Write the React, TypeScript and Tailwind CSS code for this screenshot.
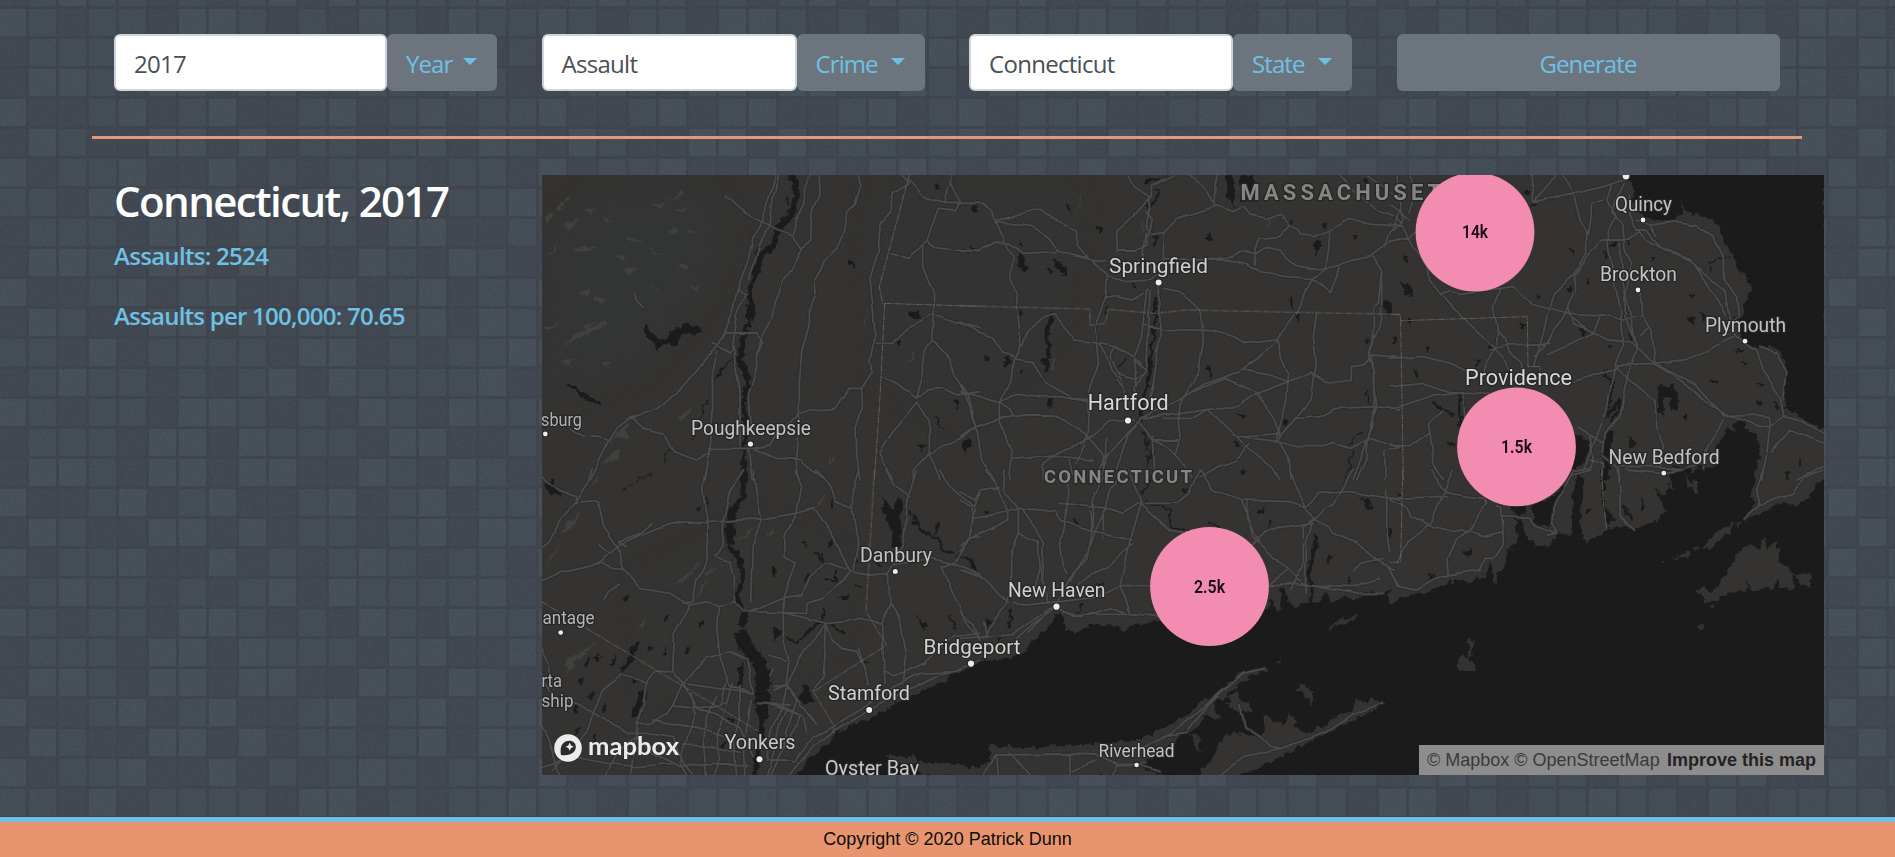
import React from "react";

/* ---------- tiled backdrop ---------- */

const TILE_ROWS = [
  "MMDLDMMMMDLLDMDMML",
  "DMLMMDMDMLDLMMMMLD",
  "LMDMMDLLMDMDLMDLMM",
  "DMMMDLLDLMMMDLLDDM",
  "DLLMDLLDLLDDLMDLMD",
  "LDDMLDMLDDMLDMLDMM",
  "DLMDDLLDLDMMDMLDLM",
  "LDMMLDDLDMDMLMDMMD",
];
const ROW_ORDER = [1, 2, 3, 4, 5, 6, 7, 0, 3, 4, 5, 6, 0, 1, 2, 3, 4, 5, 6, 7, 1, 2, 3, 4, 5, 6, 7, 0];
const TILE_FILL: Record<string, string> = { D: "#404751", M: "#434b55", L: "#464e58" };

function Backdrop() {
  return (
    <svg className="absolute inset-0 h-full w-full" aria-hidden="true">
      <defs>
        <filter id="grain" x="0" y="0" width="100%" height="100%" colorInterpolationFilters="sRGB">
          <feTurbulence type="fractalNoise" baseFrequency="0.35" numOctaves="2" seed="4" />
          <feColorMatrix values="0 0 0 0 1  0 0 0 0 1  0 0 0 0 1  0.2 0 0 0 -0.07" />
        </filter>
      </defs>
      <rect width="100%" height="100%" fill="#3d444e" />
      {ROW_ORDER.map((r, y) =>
        Array.from({ length: 64 }, (_, x) => (
          <rect
            key={`${x}-${y}`}
            x={x * 30 - 1}
            y={y * 30 - 21}
            width={27}
            height={27}
            fill={TILE_FILL[TILE_ROWS[r][x % 18]]}
          />
        ))
      )}
      <rect width="100%" height="100%" filter="url(#grain)" opacity="0.25" />
    </svg>
  );
}

/* ---------- map data: each sheet is drawn at three times scale ---------- */

type Sheet = {
  x: number;
  y: number;
  roads: string;
  water?: string;
  rivers?: [string, number][];
  ponds: string;
  hills?: string;
  borders?: string;
};

const SHEETS: Sheet[] = [
  {
    x: 540,
    y: 170,
    roads:
      "M708 15 L685 90 L665 160 L640 200 L625 270 L592 355 L575 430 L550 500 L520 535 L470 600 L410 670 L360 715 L270 745 L230 775 L200 820 L175 870 L155 930 M716 15 L700 80 L690 160 L660 220 L640 290 L625 330 M555 80 L575 90 L620 130 L705 180 L750 195 L787 238 M592 355 L615 375 L590 430 L575 530 M805 15 L790 60 L795 100 L770 150 L757 195 M838 15 L840 75 L815 130 L812 210 L787 238 L750 310 L730 330 L705 400 L700 440 L668 500 L648 545 L650 590 L625 680 L630 760 M555 492 L650 492 L668 515 L650 545 M955 15 L962 50 L945 105 L920 125 L915 180 L890 235 L850 275 L822 330 L825 370 L808 420 L808 460 L785 545 L778 640 L778 740 L768 850 L770 900 L778 930 M1085 15 L1110 40 L1060 70 L1048 130 L1020 160 L1015 240 L990 330 L1000 420 L1005 500 L990 570 L995 600 L965 655 L968 715 L948 760 L950 850 L960 930 M965 655 L925 655 L885 715 L820 720 L780 735 L720 770 L690 825 L640 835 L600 835 L510 835 L495 930 M1110 30 L1150 80 L1215 97 L1320 97 M1235 15 L1230 45 L1215 95 M1235 45 L1260 95 L1245 120 L1195 115 L1175 170 L1160 215 L1110 265 L1050 248 M1160 215 L1180 230 L1320 245 M1148 230 L1148 290 L1180 370 L1183 430 L1178 510 L1150 540 L1150 610 L1130 685 L1070 640 L1025 618 M1320 475 L1260 460 L1180 432 L1110 470 L1060 520 L1010 520 M1178 510 L1230 560 L1245 620 L1280 670 L1310 770 M1130 685 L1165 660 L1210 655 L1250 675 L1320 665 M1130 700 L1165 755 L1165 850 L1120 900 L1120 930 M1130 700 L1060 785 L1020 850 L1060 930 M1310 770 L1275 800 L1215 825 L1165 855 L1200 930 M520 515 L570 550 L580 530 L585 580 L600 660 L600 830 M530 540 L517 600 L518 740 L505 850 L470 870 L400 845 L370 790 L310 775 L280 745 M78 770 L130 800 L170 798 L205 808 M285 365 L288 390 L310 412 M640 835 L710 865 L780 868 L850 925 M625 835 L632 900 L640 930",
    rivers: [
      ["M757 15 L770 60 L760 125 L712 175", 18],
      ["M712 175 L700 228 L662 255 L650 300 L632 345 L630 440 L612 500", 15],
      ["M630 400 L634 450 M662 240 L656 275", 24],
      ["M612 500 L600 570 L625 630 L612 680", 18],
      ["M612 680 L614 780 L614 850 L610 930", 13],
      ["M740 75 L745 110 M582 567 L550 585 L527 635", 6],
      ["M502 690 L488 730 L455 808 M370 880 L380 840 L395 845", 4],
    ],
    ponds:
      "M315 465 L340 495 L370 510 L400 480 L440 462 L485 475 L460 495 L425 490 L405 530 L385 515 L350 542 L345 520 L318 500 Z M80 645 L105 650 L150 680 L180 705 L140 690 Z M925 285 L930 272 L948 293 Z M1180 45 L1195 40 L1195 60 Z M1105 430 L1140 415 L1135 440 L1120 445 Z M1065 517 L1080 512 L1080 525 Z M1245 690 L1255 690 L1258 715 Z M1185 740 L1195 745 L1208 778 Z M1265 820 L1295 810 L1275 848 Z M1130 820 L1160 828 L1145 840 Z M1295 110 L1312 105 L1300 125 Z M1290 230 L1305 232 L1300 242 Z",
    hills:
      "M330 105 L375 100 L365 112 Z M380 90 L430 65 L435 75 Z M400 125 L440 110 L430 130 Z M50 110 L90 80 L60 125 Z M70 165 L120 145 L90 185 Z M20 260 L50 210 L45 240 Z M260 200 L310 215 L270 215 Z M100 235 L180 225 L120 250 Z M330 235 L370 255 L340 250 Z M420 280 L450 295 L430 300 Z M250 300 L290 290 L270 315 Z M330 330 L360 370 L340 350 Z M450 350 L490 345 L460 362 Z M120 370 L160 345 L140 380 Z M160 375 L190 380 L180 410 Z M10 470 L60 460 L20 485 Z M70 530 L110 490 L200 455 L205 465 L120 500 Z M130 470 L170 455 L140 480 Z M60 575 L110 560 L80 585 Z M180 580 L215 570 L200 590 Z M310 500 L340 480 L320 510 Z M10 150 L40 120 L20 165 Z M140 120 L170 115 L150 135 Z M190 140 L215 155 L195 155 Z M410 740 L460 710 L430 750 Z M190 830 L260 760 L265 800 L220 810 Z M180 880 L240 830 L230 870 Z M970 470 L985 405 L980 450 Z M860 890 L885 850 L875 880 Z M1105 575 L1135 530 L1120 570 Z M380 180 L420 175 L400 190 Z M440 185 L480 180 L460 192 Z M230 255 L260 260 L240 270 Z",
    borders: "M1108 15 L1050 230 L1018 350 L1028 400 L1320 409 M1034 400 L1020 680 L1003 930",
  },
  {
    x: 960,
    y: 170,
    roads:
      "M0 97 L60 97 L95 125 L135 215 L160 260 L152 320 L170 380 L180 500 L170 560 L155 620 L118 698 L118 760 L155 850 L150 930 M112 150 L200 130 L235 120 L290 150 L345 180 L355 230 L390 270 L440 275 M112 155 L220 170 L260 200 L300 245 L390 268 M0 240 L50 245 L110 215 L150 220 L190 250 L290 245 M170 565 L130 545 L90 500 L50 485 L0 455 M180 525 L205 490 L250 440 L280 430 L310 465 L345 510 L415 520 L470 530 L500 550 L545 580 M170 568 L220 575 L260 640 L340 685 L400 690 M505 15 L520 50 L565 80 L570 120 L560 180 M640 15 L575 45 L570 80 L525 130 L470 185 L472 245 M472 240 L530 240 L560 230 L555 190 L548 270 M560 120 L580 150 L560 200 M610 270 L612 185 L570 190 M690 15 L740 60 L770 110 L700 130 L650 145 L612 185 M770 15 L765 105 L820 125 L850 110 L870 135 L925 145 L960 130 L990 170 L1015 180 L1025 195 L1060 200 L1110 180 L1170 148 L1230 160 L1320 165 M390 268 L440 315 L435 380 L405 470 L415 580 L390 650 L385 790 L350 880 M440 320 L500 335 L570 330 L610 300 M560 355 L545 500 L520 570 L530 640 L525 700 M590 350 L600 400 L600 500 L580 640 L560 720 M570 360 L565 500 L560 590 L530 650 M610 355 L660 365 L720 420 L730 500 L710 620 L665 690 L655 760 L660 800 L645 855 M550 370 L520 390 L470 380 L435 385 M550 465 L620 478 L750 482 L820 500 L860 520 L950 510 L1010 425 L1060 325 L1100 295 L1180 270 L1230 260 L1270 230 L1320 205 M610 265 L740 270 L810 270 L860 280 L910 310 L980 320 L1060 325 M740 270 L800 262 L850 245 L890 255 L920 235 L960 245 L1010 285 L1090 298 M885 285 L895 205 L960 200 L990 172 M1060 325 L1112 372 L1140 290 M1110 180 L1105 250 L1095 295 M1240 260 L1265 300 L1255 400 L1240 410 L1240 520 L1225 560 L1240 600 L1250 710 L1225 800 L1220 860 L1190 930 M1265 300 L1265 450 L1230 540 L1245 640 L1240 760 L1180 930 M1320 120 L1290 190 L1275 235 M1220 15 L1320 90 M1140 15 L1180 60 L1250 120 L1300 140 M540 745 L640 700 L740 640 L840 605 L900 560 L955 512 L960 560 L985 620 L980 690 L955 790 L945 815 M690 670 L760 640 L800 625 L890 670 L940 740 L960 800 M800 620 L850 600 L930 615 L985 635 L1050 610 L1100 635 L1170 635 L1172 590 L1210 585 L1240 555 L1320 562 M1070 430 L1060 500 L1068 570 L1050 690 L1010 740 L950 815 M540 745 L620 735 L740 715 L830 710 L890 670 L985 635 M1010 745 L1080 740 L1130 715 L1250 710 L1320 720 M610 745 L690 745 L740 715 L800 770 L850 820 L940 895 L960 930 M820 795 L880 805 L950 815 L1010 830 L1090 830 L1120 820 L1170 835 L1230 805 L1320 835 M960 790 L830 800 M955 815 L985 870 L990 930 M870 820 L830 870 L770 890 L720 920 M1275 930 L1275 845 L1320 835 M0 665 L60 680 L118 698 L170 670 L240 680 L300 680 L385 695 M0 640 L50 770 L65 870 L105 930 M0 805 L50 770 L118 745 L200 735 L285 735 L385 800 L430 850 L430 890 M155 865 L230 858 L310 860 L400 870 M118 698 L150 720 L160 740 M540 750 L520 770 L440 860 L420 930 M540 750 L500 800 L470 900 M540 760 L580 810 L620 830 L655 865 L700 920 M580 810 L655 810 M580 800 L585 930 M520 750 L450 755 L400 800 L290 850 L250 880 L250 930 M545 580 L500 550 L465 530 L450 560 L465 600 L490 640 L495 690 M520 570 L560 600 L530 625 L470 610 M415 520 L440 560 L455 605 L495 660 M330 870 L345 930 M440 800 L440 850 L400 930",
    rivers: [
      ["M585 60 L600 65 L575 110 L555 110 M570 180 L595 205 L580 225", 5],
      ["M587 380 L582 500 L570 580 L565 640 L545 700 L540 760", 9],
      ["M545 780 L560 820 L570 810 L555 840 L580 850 L560 870 L565 930", 4],
      ["M280 425 L262 480 L265 560 L260 605", 11],
      ["M455 598 L480 590 L500 565 M520 345 L530 355 M440 410 L438 435 M1205 790 L1180 800 L1168 825 M1175 840 L1168 890 L1155 930 M1220 660 L1220 690 L1230 700", 4],
    ],
    ponds:
      "M800 15 L820 15 L822 110 L800 75 Z M840 15 L880 15 L875 90 L845 90 Z M33 122 L48 103 L45 120 Z M315 105 L325 110 L330 130 Z M410 165 L425 175 L425 195 Z M170 260 L185 250 L200 300 L180 295 Z M175 218 L188 220 L185 230 Z M275 262 L300 285 L320 290 L318 318 L295 295 Z M265 298 L275 295 L272 308 Z M560 25 L600 28 L560 40 Z M735 205 L750 190 L757 212 Z M1065 215 L1083 212 L1070 258 Z M990 150 L1000 155 L995 170 Z M1090 160 L1100 165 L1095 178 Z M1178 195 L1190 195 L1185 212 Z M1270 390 L1295 410 L1290 432 L1275 425 Z M990 380 L1000 395 L995 420 Z M1010 430 L1020 435 L1015 455 Z M178 420 L188 430 L182 450 Z M73 558 L85 560 L82 573 Z M132 560 L150 555 L140 598 Z M180 605 L190 600 L186 615 Z M245 570 L268 575 L262 608 Z M265 680 L283 690 L275 712 L263 705 Z M740 590 L752 592 L748 622 Z M828 730 L855 740 L850 750 Z M970 740 L982 750 L975 770 Z M5 825 L35 812 L15 845 Z M825 815 L838 820 L832 827 Z M845 900 L860 908 L855 915 Z M1215 508 L1228 512 L1225 528 Z M1300 505 L1308 510 L1302 525 Z M1205 30 L1220 28 L1215 45 Z M30 230 L48 235 L40 240 Z",
    hills: "M905 170 L940 145 L920 165 Z M350 130 L370 40 L360 110 Z M540 190 L555 140 L550 180 Z M270 600 L285 560 L280 600 Z M275 480 L285 440 L280 470 Z",
    borders: "M0 407 L390 417 L390 465 L435 460 L445 418 L585 430 L680 420 L1320 433",
  },
  {
    x: 1390,
    y: 170,
    roads:
      "M20 140 L75 240 L115 290 L118 330 L155 375 L200 425 L230 455 L270 490 L310 530 L340 560 L355 600 M155 375 L180 365 L210 370 L330 355 L370 350 L430 405 L530 430 L640 435 L700 450 L750 435 M330 355 L310 410 L322 475 L320 530 L290 570 L285 620 M320 480 L350 510 L365 550 L395 580 L395 600 M500 15 L430 95 L560 70 L640 50 L700 30 M430 15 L430 95 M520 15 L550 70 L570 150 L590 180 L590 250 L550 310 L490 370 L470 440 L460 490 L430 590 M640 90 L605 100 L602 150 L595 190 M665 40 L650 90 L678 140 L655 180 L655 230 L670 320 L690 410 L700 500 L700 530 L675 580 L650 720 L620 800 L580 900 M700 40 L675 90 L665 130 L698 160 L705 240 L725 280 L705 380 L705 440 L720 470 L740 530 L715 620 L690 740 L645 790 L640 850 M640 210 L715 210 L750 185 L770 210 L830 240 L900 270 L940 310 L1005 365 L1015 430 L1025 490 L1100 540 L1120 600 L1170 680 L1180 735 M715 80 L720 130 L740 180 L770 180 L810 230 L900 265 L960 360 L1000 410 L1005 440 M740 150 L780 165 L860 155 L920 165 L970 200 L1000 260 L1000 330 L1040 380 L1045 440 L1010 470 M780 165 L800 200 M690 220 L700 340 L720 430 L740 530 M635 210 L600 250 L550 320 L555 360 L530 430 L490 480 L480 510 L430 560 M530 430 L600 480 L650 510 L720 515 L780 570 L830 600 L910 640 L1000 740 M680 585 L790 580 L880 570 L960 540 L1010 510 L1035 500 M750 360 L755 430 L785 480 L795 580 M755 500 L780 475 M675 590 L750 655 L795 690 L800 770 L820 830 L810 890 M500 650 L600 620 L680 590 M470 550 L540 520 L610 490 L630 440 M300 540 L360 525 L480 520 M600 480 L550 460 L535 410 M0 565 L100 560 L180 580 L240 610 M0 650 L100 640 L180 665 L300 670 M0 720 L60 700 L130 675 L220 665 M0 830 L60 830 L120 785 L115 760 L155 720 M120 785 L130 880 L160 930 M0 215 L60 200 L75 190 M0 185 L40 150 L30 90 L20 15 M60 15 L80 60 L60 130 M0 105 L60 150 M220 665 L225 750 M790 580 L870 630 L940 690 L1000 735 L1060 750 L1110 770 L1140 765 L1180 740 L1240 755 L1302 790 M1000 740 L1100 735 L1135 740 L1140 770 L1130 850 L1115 930 M1000 750 L960 820 L945 850 L940 900 M690 890 L810 890 L870 900 L940 880 M560 770 L640 820 M600 800 L610 870 L600 895 L550 905 M640 860 L690 900 L690 930 M1220 930 L1302 890 M1110 530 L1160 550 L1190 610 L1180 690 M1140 845 L1200 780 L1302 820",
    water:
      "M1302 5 L712 5 L720 30 L735 60 L722 95 L745 115 L760 140 L800 150 L860 150 L880 125 L865 85 L890 130 L945 135 L985 165 L1000 210 L1020 240 L1050 300 L1082 345 L1078 380 L1062 400 L1062 440 L1030 440 L1045 480 L1065 520 L1100 532 L1150 530 L1180 555 L1188 600 L1182 690 L1188 715 L1240 750 L1310 782 Z M885 930 L895 910 L930 900 L925 880 L950 895 L985 890 L960 870 L990 862 L975 835 L1000 800 L1010 770 L1035 785 L1030 760 L1065 750 L1060 775 L1100 790 L1110 850 L1090 930 Z M545 790 L575 800 L600 815 L595 850 L570 890 L545 910 L520 930 L470 930 Z M640 820 L650 770 L670 780 L655 930 L640 930 Z M835 905 L865 905 L880 930 L835 930 Z",
    rivers: [
      ["M645 600 L660 640 L670 620 L650 740 L680 700 L700 690 L660 760", 9],
      ["M960 305 L958 275 L985 265 L1020 262", 4],
      ["M125 695 L150 715 L190 735 M212 670 L210 770 M200 740 L230 750 M175 820 L195 830", 8],
    ],
    ponds:
      "M810 650 L850 645 L862 670 L862 720 L840 720 L845 680 L820 680 L820 735 L805 730 Z M540 235 L550 240 L545 250 Z M590 330 L605 335 L598 345 Z M530 355 L545 350 L540 368 Z M570 480 L590 478 L578 498 Z M655 525 L668 525 L660 535 Z M715 485 L728 490 L722 510 Z M650 220 L685 222 L670 230 Z M715 210 L722 215 L715 222 Z M785 255 L795 260 L788 275 Z M900 375 L915 378 L910 388 Z M895 445 L915 440 L908 465 Z M930 425 L945 440 L940 455 Z M1040 540 L1058 542 L1050 550 Z M1058 575 L1072 575 L1063 588 Z M965 630 L985 635 L978 645 Z M1105 640 L1125 640 L1112 650 Z M1100 690 L1115 695 L1105 705 Z M875 735 L892 735 L885 752 Z M720 800 L738 820 L722 830 Z M1155 690 L1165 710 L1158 725 Z M390 460 L410 465 L395 480 Z M35 335 L55 340 L68 378 L45 370 Z M40 255 L55 260 L48 278 Z M55 445 L65 455 L60 465 Z M105 525 L118 530 L112 548 Z M73 600 L88 608 L80 622 Z M295 525 L315 530 L302 540 Z M255 565 L268 575 L262 588 Z M435 375 L448 380 L440 390 Z M405 60 L420 65 L415 75 Z M640 250 L655 255 L645 265 Z M10 500 L18 505 L14 525 Z M1225 870 L1235 875 L1230 890 Z M425 95 L435 100 L428 112 Z",
    borders: "M8 433 L30 433 L32 452 L412 440 L414 590 L450 590 L450 640 M32 452 L40 930 M600 870 L640 880 L635 930",
  },
  {
    x: 540,
    y: 470,
    roads:
      "M155 0 L150 30 L110 95 L60 150 L30 210 L5 235 M5 20 L60 65 L110 80 L108 100 L175 95 L190 165 L235 235 L250 295 L300 355 L390 370 L430 395 L450 405 L500 395 L535 410 L580 395 L610 425 L730 428 L780 440 L860 460 L920 455 L960 445 L1025 460 M5 330 L60 305 L130 290 L180 275 L240 225 L300 195 L400 155 L500 158 L600 150 L680 145 L770 130 L820 115 L860 165 L930 305 L990 315 L1045 310 L1060 285 L1170 265 L1240 280 L1320 315 M180 275 L215 295 L255 298 M235 215 L255 230 M240 215 L300 190 L335 160 M180 225 L205 245 M495 0 L488 60 L500 150 L505 270 L470 330 L460 395 M610 0 L570 60 L550 150 L550 220 L525 260 L570 275 L580 320 L580 395 M640 0 L650 80 L665 145 L640 220 L635 400 M765 0 L785 50 L770 130 L735 200 L735 260 L765 280 L730 380 L730 500 L745 560 L735 640 L780 700 L830 760 M635 425 L730 385 L785 378 L810 320 L860 280 L920 300 M930 310 L850 385 L800 400 L800 430 L735 428 M830 0 L870 50 L885 95 L940 115 L955 210 L940 300 M955 0 L940 60 L940 110 M450 405 L400 500 L395 600 L430 640 L530 655 L640 670 M535 410 L530 470 L540 560 L570 650 L630 665 M460 395 L430 400 M860 465 L855 550 L850 620 L820 660 M860 465 L780 560 L740 640 L700 650 M860 465 L880 510 L910 540 L950 540 L980 620 M955 530 L975 600 L985 640 M1045 310 L1050 400 L1080 450 L1100 560 L1090 640 M1050 400 L1025 460 L1030 570 L1035 640 M1130 0 L1105 80 L1090 220 L1060 285 M1205 285 L1240 370 L1270 440 L1320 510 M1320 200 L1280 210 L1250 275 L1210 290 M1195 0 L1230 50 L1300 110 L1290 190 M1300 110 L1320 70 M1040 0 L1065 50 L1110 80 M880 770 L940 730 L1000 690 L1060 650 L1140 610 L1240 605 L1320 570 M880 785 L950 745 L1020 700 L1100 660 L1180 620 L1260 600 M1035 605 L1060 620 L1090 610 L1150 580 L1240 500 L1320 490 M5 530 L30 590 L30 650 M5 610 L40 680 L110 700 L160 725 L200 750 L240 770 L270 790 L340 790 L400 800 L430 880 L460 915 M160 725 L190 660 L240 615 L300 630 L320 640 L310 700 L290 760 L290 800 L270 915 M320 640 L345 605 L395 600 M395 600 L430 645 L470 715 L540 740 L600 770 L620 820 L640 860 M430 645 L500 560 L570 545 L620 570 L640 670 M430 640 L400 700 L380 730 L330 760 L290 760 M340 750 L420 765 L490 780 L550 800 M400 705 L450 710 L520 715 L560 700 M450 670 L465 730 L440 800 L420 880 L440 915 M530 680 L500 740 L490 820 L500 915 M545 700 L560 640 M580 640 L560 715 L530 790 L540 860 L520 915 M600 650 L600 740 L580 810 L590 915 M630 690 L620 770 L610 840 L615 915 M160 725 L140 790 L100 830 L40 900 M5 890 L100 860 L200 880 L290 890 L400 880 M200 915 L230 850 L290 800 L340 850 L420 890 L520 880 L620 885 M430 825 L520 830 L600 850 M5 765 L20 800 L40 860 L60 915 M690 555 L735 570 M690 705 L740 715 L720 760 L700 850 L680 915 M690 705 L780 735 L770 770 L720 850 L690 915 M740 715 L790 740 L800 780 M735 640 L770 690 L745 770 L730 830 M700 660 L740 640 L730 700 L690 800 L680 870 M880 785 L820 830 L770 890 L750 915 M880 770 L820 800 L760 880 M700 600 L690 620 M650 700 L750 705 M680 870 L740 870 L780 880 M195 385 L210 360 L235 340",
    water:
      "M765 925 L800 875 L830 845 L870 820 L885 790 L930 765 L990 745 L1040 715 L1080 690 L1140 665 L1170 650 L1210 640 L1240 620 L1290 595 L1320 575 L1420 560 L1420 925 Z",
    rivers: [
      ["M612 0 L610 80 L575 125", 16],
      ["M573 115 L570 220", 28],
      ["M565 225 L588 255 L612 300 L600 350 L590 395 L618 430", 14],
      ["M614 430 L600 470", 22],
      ["M600 480 L612 520 L650 570 L668 620", 38],
      ["M668 600 L668 700", 44],
      ["M667 700 L667 750", 34],
      ["M667 750 L665 800 L640 915", 17],
      ["M1110 125 L1140 180 L1200 210 L1205 240 L1240 250 M1195 160 L1180 200 M1250 260 L1300 280 L1310 305", 7],
      ["M740 500 L770 515 L830 465 L845 460 L850 415 M865 465 L920 488", 8],
      ["M785 215 L800 230 M870 210 L872 235 M820 245 L845 275 L850 255 M860 330 L885 335 L890 300", 8],
      ["M250 55 L280 45 M290 35 L335 10", 3],
    ],
    ponds:
      "M1030 85 L1060 130 L1070 80 L1082 90 L1080 200 L1090 230 L1060 235 L1055 180 L1040 150 Z M465 115 L480 110 L475 125 Z M500 85 L508 100 L503 110 Z M870 95 L882 90 L876 115 Z M700 290 L712 292 L702 318 Z M795 320 L810 310 L800 335 Z M890 380 L930 376 L910 390 Z M945 340 L960 350 L945 350 Z M250 385 L270 375 L260 392 Z M370 440 L385 435 L375 455 Z M475 460 L490 455 L482 472 Z M700 475 L730 480 L705 510 Z M245 605 L280 530 L300 515 L265 590 Z M135 580 L150 565 L145 590 Z M165 560 L178 555 L168 575 Z M205 585 L230 555 L222 585 Z M118 630 L130 625 L122 645 Z M145 680 L165 660 L155 690 Z M320 530 L335 525 L328 545 Z M368 555 L382 530 L375 555 Z M435 545 L452 530 L440 550 Z M595 590 L610 580 L605 650 L597 650 Z M275 620 L290 630 L280 642 Z M305 660 L318 665 L290 740 L275 735 Z M100 720 L115 700 L110 730 Z M185 710 L195 705 L190 725 Z M565 745 L580 745 L575 765 Z M545 830 L565 815 L550 835 Z M100 795 L125 765 L110 790 Z M160 800 L170 795 L165 815 Z M1125 435 L1160 470 L1155 480 Z M1230 435 L1245 480 L1238 480 Z M775 690 L800 640 L805 665 L820 690 L800 700 Z M970 570 L985 580 L975 582 Z M1000 270 L1025 290 L1015 292 Z M940 265 L950 270 L940 290 Z M15 40 L45 30 L40 50 L65 75 L20 65 Z",
    hills:
      "M590 215 L650 160 L620 200 Z M485 315 L550 280 L510 310 Z M405 340 L480 275 L440 330 Z M60 190 L130 110 L100 170 Z M10 300 L70 200 L40 260 Z M80 570 L170 515 L140 545 L80 610 Z M820 110 L865 70 L840 105 Z M680 200 L700 170 L695 195 Z M290 480 L325 440 L310 470 Z M470 385 L500 320 L490 370 Z M320 710 L345 670 L330 700 Z M150 50 L180 10 L170 40 Z",
    borders: "M5 395 L658 785 M1003 0 L978 425 L1040 525 L820 665 L882 768 L880 790",
  },
  {
    x: 960,
    y: 470,
    roads:
      "M80 0 L110 45 L140 120 L140 150 L60 190 L0 225 M135 0 L130 60 L175 115 L175 190 L155 240 L155 330 L140 400 L90 470 L70 505 M0 90 L30 110 L35 145 L100 135 L180 115 L240 120 L290 125 L300 150 L395 185 L515 210 M35 145 L25 210 L0 240 M0 65 L45 90 L60 60 L120 50 M175 190 L235 215 L240 300 L225 350 M185 115 L225 170 L250 220 L245 330 L265 400 M320 0 L320 60 L320 130 L300 210 L310 290 L320 310 M440 0 L400 90 L395 190 L380 270 L330 320 L290 400 M495 0 L450 60 L430 130 L375 260 L330 330 M300 100 L430 110 L490 130 L545 95 L510 0 M545 95 L520 180 L500 250 L480 350 L510 430 M545 105 L630 180 L720 195 M520 220 L440 290 L400 310 L350 350 M390 120 L395 190 M430 120 L430 210 M545 100 L650 100 L690 70 L720 0 M720 0 L760 60 L850 90 L990 95 L1040 110 L1065 150 L1100 165 L1110 185 L1190 215 L1240 260 L1280 285 L1300 300 M845 90 L880 200 L980 300 L1030 340 L1200 370 L1270 370 M860 90 L860 150 L900 215 M1040 110 L1010 60 L985 0 M1040 110 L1080 70 L1170 65 L1260 80 L1320 90 M1065 150 L1030 170 L1030 290 L985 360 M1060 150 L1040 210 L1035 370 M860 240 L920 180 L1000 170 L1060 160 M1065 150 L1100 110 L1120 100 L1180 0 M1280 60 L1280 180 L1290 250 M1175 305 L1200 280 L1270 265 M1280 285 L1310 350 M0 505 L70 500 L160 490 L250 430 L290 410 L340 440 L400 430 L510 430 L590 440 M160 400 L200 405 L240 400 L300 395 L420 380 L480 350 L570 350 M310 425 L360 440 L450 410 L500 430 L600 440 M170 505 L220 460 L290 415 M0 430 L40 460 L60 510 M70 455 L80 500 M200 490 L260 430 M930 345 L990 340 L1060 345 L1180 350 L1260 325 M930 340 L985 300 M550 830 L620 800 L700 740 L790 660 L850 610 L915 595 M610 800 L680 790 L740 710 L800 655 M840 705 L855 770 L900 800 L930 830 L960 835 L1050 805 L1110 780 L1180 735 L1270 697 M780 915 L850 860 L960 835 M70 915 L110 855 L330 852 L410 855 L470 880 L560 880 M110 855 L115 915 M150 850 L190 890 L210 915 M330 852 L330 915 M330 905 L410 870 M455 915 L470 885 L530 882 L600 905 M0 300 L60 320 L145 400",
    water:
      "M-40 620 L30 590 L60 585 L100 600 L130 590 L150 560 L190 550 L220 510 L260 480 L280 450 L295 425 L310 450 L318 480 L360 482 L390 465 L450 465 L490 480 L540 460 L590 455 L640 440 L760 450 L900 430 L930 405 L935 380 L945 430 L960 420 L965 345 L985 390 L1000 410 L1040 400 L1055 365 L1060 400 L1080 395 L1100 370 L1115 400 L1140 390 L1155 375 L1180 395 L1200 375 L1230 365 L1255 375 L1290 360 L1280 400 L1420 370 L1420 925 L-40 925 Z",
    rivers: [
      ["M1070 195 L1060 250 L1048 290 L1055 370", 14],
      ["M550 95 L590 105 L630 115 L630 170 L720 195 M575 20 L560 50 L545 75 M745 155 L780 175", 5],
      ["M5 262 L30 270 L50 310 M155 420 L155 445 L140 470", 7],
      ["M350 430 L370 400 M400 350 L435 340", 4],
    ],
    ponds:
      "M75 120 L88 125 L78 135 Z M345 150 L355 165 L345 170 Z M893 130 L912 110 L910 130 Z M925 150 L935 150 L930 175 Z M1205 85 L1225 90 L1235 118 L1215 105 Z M1105 255 L1115 255 L1105 285 Z M1165 315 L1172 330 L1167 345 Z M670 50 L685 55 L675 70 Z M845 0 L860 5 L858 15 Z M80 445 L95 455 L85 470 Z M118 495 L128 500 L118 515 Z M1310 70 L1320 75 L1315 80 Z",
    borders: "",
  },
  {
    x: 1390,
    y: 470,
    roads:
      "M130 0 L150 50 L175 70 L280 85 L290 100 L240 180 L195 210 L170 260 L175 315 L150 320 L80 360 L25 350 L0 310 M190 0 L160 70 L125 155 L50 220 L20 280 M0 90 L40 110 L60 145 L100 150 L130 170 L190 185 L215 180 L280 200 L340 185 M0 85 L170 80 M320 110 L335 115 L340 220 L310 265 L285 265 L270 300 L175 315 M340 140 L420 145 L430 165 L470 178 L500 190 L470 195 M550 10 L490 110 L485 160 L500 185 M600 0 L550 15 M685 0 L690 60 L690 140 L730 180 M710 0 L810 10 L870 0 M1120 0 L1100 60 L1110 105 L1080 130 L1065 150 M1110 105 L1150 85 L1210 70 L1240 25 L1302 0",
    water:
      "M0 400 L30 382 L70 375 L110 370 L130 355 L165 345 L175 325 L190 340 L215 330 L230 340 L270 320 L290 325 L300 270 L315 345 L322 310 L345 290 L350 250 L345 235 L355 240 L380 220 L378 130 L395 150 L410 200 L430 215 L440 232 L490 215 L500 190 L545 195 L550 60 L560 10 L580 30 L572 110 L570 170 L590 222 L610 205 L640 190 L655 175 L690 170 L740 175 L780 160 L800 155 L822 130 L815 90 L795 55 L830 80 L840 -10 L900 -10 L915 60 L930 -10 L1095 -10 L1095 30 L1085 60 L1090 110 L1060 150 L1140 118 L1180 95 L1220 110 L1250 85 L1280 45 L1310 25 L1310 930 L-30 930 L-30 405 Z M360 108 L410 108 L405 135 L365 125 Z M425 105 L480 85 L545 30 L500 95 L480 170 L430 160 Z M630 0 L645 0 L645 110 L675 150 L650 170 L640 120 Z",
    ponds:
      "M218 245 L250 238 L235 262 Z M115 315 L135 310 L130 328 Z M585 125 L605 122 L598 135 Z M755 85 L765 115 L755 125 Z M695 100 L710 115 L725 150 L705 130 Z M1182 10 L1205 12 L1192 28 Z M0 180 L5 190 L0 210 Z",
    borders: "M38 0 L32 275 L0 278 M635 0 L640 90 L650 180",
  },
];

const ISLANDS: [number, number, string][] = [
  [540, 470, "M1035 860 L1070 855 L1110 865 L1120 845 L1135 870 L1170 880 L1240 880 L1280 890 L1270 915 L1140 915 L1135 880 L1090 885 L1060 875 Z"],
  [960, 470, "M-40 915 L20 895 L65 890 L90 870 L88 825 L115 822 L120 835 L155 820 L160 835 L260 830 L400 822 L480 815 L545 808 L600 780 L680 735 L735 685 L770 675 L840 610 L915 590 L918 602 L870 620 L805 665 L808 680 L760 700 L780 745 L730 735 L725 760 L690 790 L720 800 L715 850 L690 770 L640 815 L590 855 L545 880 L560 900 L620 920 L-40 920 Z"],
  [960, 470, "M715 915 L745 880 L765 850 L790 800 L820 790 L850 792 L890 800 L915 785 L910 740 L925 725 L935 750 L975 765 L990 725 L1005 745 L1005 770 L1030 790 L1090 770 L1130 735 L1170 725 L1190 685 L1220 700 L1232 685 L1272 697 L1240 720 L1180 750 L1100 790 L1000 840 L900 890 L830 920 Z"],
  [960, 470, "M815 670 L830 660 L840 690 L880 715 L875 730 L830 720 L790 700 L810 695 Z M1008 655 L1020 642 L1060 665 L1055 712 L1040 680 Z M1107 475 L1140 447 L1198 433 L1150 465 Z M945 578 L967 558 L957 582 Z M805 675 L818 678 L812 686 Z"],
  [1390, 470, "M235 505 L250 520 L241 565 L260 590 L250 603 L203 603 L208 568 L220 555 L236 565 Z M848 264 L875 255 L893 240 L897 260 Z M908 235 L930 232 L915 245 Z M940 232 L970 195 L1030 158 L1022 180 L960 238 Z M806 282 L820 270 L828 277 Z"],
  [1390, 470, "M912 357 L945 355 L965 368 L985 345 L1010 305 L1030 275 L1040 250 L1080 222 L1108 240 L1122 198 L1130 240 L1157 215 L1168 240 L1165 275 L1200 295 L1212 330 L1215 356 L1170 355 L1160 325 L1150 358 L1085 360 L1075 330 L1070 362 L1015 368 L975 397 L958 395 L945 392 Z M1216 320 L1255 310 L1262 355 L1248 345 L1225 340 Z M918 472 L935 465 L940 478 Z M955 405 L972 408 L965 414 Z"],
  [1390, 470, "M352 155 L372 150 L370 200 L365 240 L350 235 Z M395 155 L410 170 L425 195 L435 200 L415 205 L400 190 Z M430 225 L460 205 L488 200 L485 222 L450 232 Z M1035 162 L1055 155 L1040 170 Z M885 10 L900 30 L925 60 L920 70 L895 50 Z M830 5 L850 55 L838 50 Z"],
];

type Place = { t: string; x: number; y: number; w: number; dx?: number; dy?: number; r?: number; s: number; c?: string };
const PLACES: Place[] = [
  { t: "Springfield", x: 1109, y: 272.5, w: 99, dx: 1158.6, dy: 282.5, r: 3, s: 20.5, c: "#d0d0cf" },
  { t: "Hartford", x: 1087.7, y: 409.5, w: 81, dx: 1128, dy: 420.5, r: 3.1, s: 22, c: "#d8d8d7" },
  { t: "Poughkeepsie", x: 691, y: 434.5, w: 120, dx: 750.5, dy: 444, r: 2.6, s: 19.5 },
  { t: "sburg", x: 541, y: 426, w: 41, dx: 545.3, dy: 434, r: 2.4, s: 18, c: "#b0b0af" },
  { t: "Quincy", x: 1615, y: 210.5, w: 57, dx: 1643, dy: 220, r: 2.4, s: 19.5 },
  { t: "Brockton", x: 1600, y: 280.5, w: 77, dx: 1638, dy: 290, r: 2.4, s: 19.5 },
  { t: "Plymouth", x: 1705, y: 331.5, w: 81, dx: 1745, dy: 341.2, r: 2.4, s: 19.5 },
  { t: "Providence", x: 1465, y: 385, w: 107, s: 22, c: "#d8d8d7" },
  { t: "New Bedford", x: 1608.5, y: 463.5, w: 111, dx: 1663.8, dy: 473.2, r: 2.4, s: 19.5 },
  { t: "Danbury", x: 860, y: 561.5, w: 72, dx: 895.3, dy: 571.5, r: 2.5, s: 19.5 },
  { t: "antage", x: 542.5, y: 624, w: 52, dx: 560.7, dy: 632.6, r: 2.4, s: 17.5, c: "#b5b5b4" },
  { t: "rta", x: 541.5, y: 686.5, w: 20.5, s: 17.5, c: "#b0b0af" },
  { t: "ship", x: 541.5, y: 706.5, w: 32, s: 17.5, c: "#b0b0af" },
  { t: "Bridgeport", x: 923.5, y: 653.5, w: 97, dx: 971, dy: 663.6, r: 3.1, s: 20.5, c: "#d0d0cf" },
  { t: "New Haven", x: 1008, y: 596.5, w: 97.5, dx: 1056.5, dy: 606.7, r: 3.1, s: 20.5, c: "#d0d0cf" },
  { t: "Stamford", x: 828, y: 699.5, w: 82, dx: 869.2, dy: 710, r: 3, s: 20.5, c: "#d0d0cf" },
  { t: "Yonkers", x: 724.5, y: 749, w: 71, dx: 759.5, dy: 759.3, r: 3, s: 20.5, c: "#c8c8c7" },
  { t: "Oyster Bay", x: 825, y: 775, w: 94, s: 20.5, c: "#c8c8c7" },
  { t: "Riverhead", x: 1098.5, y: 756.5, w: 76, dx: 1136.6, dy: 765, r: 2.3, s: 18 },
];

const CLUSTERS = [
  { x: 1475, y: 232, label: "14k", w: 26 },
  { x: 1516.5, y: 446.8, label: "1.5k", w: 31 },
  { x: 1209.5, y: 586.5, label: "2.5k", w: 31 },
];

const at = (s: { x: number; y: number }) => `translate(${s.x} ${s.y}) scale(0.333333)`;

function MapCanvas() {
  return (
    <svg className="block h-full w-full" viewBox="542 175 1282 600" preserveAspectRatio="none">
      <defs>
        <filter id="coast" filterUnits="userSpaceOnUse" x="530" y="160" width="1310" height="630" colorInterpolationFilters="sRGB">
          <feTurbulence type="fractalNoise" baseFrequency="0.14" numOctaves="3" seed="8" />
          <feDisplacementMap in="SourceGraphic" scale="8" xChannelSelector="R" yChannelSelector="G" />
        </filter>
        <filter id="bend" filterUnits="userSpaceOnUse" x="530" y="160" width="1310" height="630" colorInterpolationFilters="sRGB">
          <feTurbulence type="fractalNoise" baseFrequency="0.05" numOctaves="1" seed="3" />
          <feDisplacementMap in="SourceGraphic" scale="6" xChannelSelector="R" yChannelSelector="G" />
        </filter>
        <filter id="soft" x="-20%" y="-20%" width="140%" height="140%" colorInterpolationFilters="sRGB">
          <feGaussianBlur stdDeviation="12" />
        </filter>
      </defs>
      <rect x="542" y="175" width="1282" height="600" fill="#343332" />
      <g fill="#343635" opacity="0.7" filter="url(#soft)">
        <path d="M535 240 L600 190 L710 190 L730 240 L700 300 L640 370 L545 400 Z" />
        <path d="M870 190 L1080 190 L1060 330 L960 420 L880 380 Z" opacity=".6" />
        <path d="M640 580 L760 520 L850 560 L830 660 L650 690 Z" opacity=".7" />
      </g>
      <g fill="#4a4a48" opacity="0.6" filter="url(#coast)">
        {SHEETS.map((s, i) => (
          <path key={i} transform={at(s)} d={s.hills || "M0 0"} />
        ))}
      </g>
      <g fill="#1b1b1b" filter="url(#coast)">
        {SHEETS.map((s, i) => (
          <g key={i} transform={at(s)}>
            {s.water && <path d={s.water} />}
            <path d={s.ponds} stroke="#1b1b1b" strokeWidth="3" />
            {(s.rivers || []).map(([d, w], k) => (
              <path key={k} d={d} fill="none" stroke="#1b1b1b" strokeWidth={w} strokeLinejoin="round" />
            ))}
          </g>
        ))}
        {ISLANDS.map(([x, y, d], i) => (
          <path key={i} transform={at({ x, y })} d={d} fill="#343332" />
        ))}
      </g>
      <g fill="none" strokeLinejoin="round" strokeLinecap="round" filter="url(#bend)">
        {SHEETS.map((s, i) => (
          <path key={i} transform={at(s)} d={s.roads} stroke="#2b2b2b" strokeWidth="11" opacity="0.7" />
        ))}
        {SHEETS.map((s, i) => (
          <path key={i} transform={at(s)} d={s.roads} stroke="#4a4a4b" strokeWidth="5.4" />
        ))}
      </g>
      <g fill="none" stroke="#6a6a68" strokeWidth="2.8" strokeDasharray="20 3 5 3" opacity="0.85">
        {SHEETS.map((s, i) => (
          <path key={i} transform={at(s)} d={s.borders || "M0 0"} />
        ))}
      </g>
      <g className="font-['Roboto',sans-serif]" stroke="#262626" strokeWidth="2.5" paintOrder="stroke" strokeLinejoin="round">
        <text x="1240.5" y="199.5" fontSize="22" fontWeight="700" fill="#858583" textLength="236" lengthAdjust="spacing">
          MASSACHUSETTS
        </text>
        <text x="1044" y="483" fontSize="18.5" fontWeight="700" fill="#858583" textLength="148" lengthAdjust="spacing">
          CONNECTICUT
        </text>
        {PLACES.map((p) => (
          <text
            key={p.t}
            x={p.x}
            y={p.y}
            fontSize={p.s}
            fill={p.c || "#c2c2c1"}
            textLength={p.w}
            lengthAdjust="spacingAndGlyphs"
          >
            {p.t}
          </text>
        ))}
      </g>
      <g fill="#ececec" stroke="#1d1d1d" strokeWidth="1.6" paintOrder="stroke">
        {PLACES.filter((p) => p.dx).map((p) => (
          <circle key={p.t} cx={p.dx} cy={p.dy} r={p.r} />
        ))}
        <circle cx="1626" cy="176" r="3.4" />
      </g>
      {CLUSTERS.map((c) => (
        <g key={c.label}>
          <circle cx={c.x} cy={c.y} r="59.4" fill="#f28cb1" />
          <text
            className="font-['Roboto',sans-serif]"
            x={c.x}
            y={c.y + 6.3}
            fontSize="18"
            fontWeight="600"
            textAnchor="middle"
            textLength={c.w}
            lengthAdjust="spacingAndGlyphs"
            fill="#1c0b12"
          >
            {c.label}
          </text>
        </g>
      ))}
    </svg>
  );
}

function MapboxLogo() {
  return (
    <div className="absolute bottom-[12px] left-[12px] flex items-center gap-[5px]">
      <svg width="28" height="28" viewBox="0 0 28 28">
        <circle cx="14" cy="14" r="13.8" fill="#ececec" />
        <path d="M7 21 C6 15 7 11.500 9.500 9 C12.500 6 17.500 6 20 8.500 C22.700 11.200 22.300 15.500 19.500 18.300 C16.500 21.200 11.500 21.700 7 21 Z" fill="#2b2b2b" />
        <path d="M15.700 8.600 L17 11.400 L19.800 12.700 L17 14 L15.700 16.800 L14.400 14 L11.600 12.700 L14.400 11.400 Z" fill="#f4f4f4" />
      </svg>
      <svg width="96" height="30" viewBox="0 0 96 30">
        <text x="1" y="21.500" className="font-['Lato',sans-serif]" fontSize="24" fontWeight="700" fill="#ececec" textLength="91" lengthAdjust="spacingAndGlyphs">
          mapbox
        </text>
      </svg>
    </div>
  );
}

/* ---------- page ---------- */

function Picker({ value, label, width }: { value: string; label: string; width: string }) {
  return (
    <div className="w-1/4 px-[22px]">
      <div className="flex h-[57px] w-[383px]">
        <div className="flex min-w-0 flex-1 items-center rounded-[6px] border-2 border-[#ced4da] bg-white pl-[18px] pt-[3px] text-[24px] tracking-[-0.7px] text-[#495057]">
          {value}
        </div>
        <button className={`${width} flex shrink-0 items-center justify-between rounded-[6px] bg-[#6c757d] pl-[19px] pr-[20px] pt-[3px] text-[24px] tracking-[-0.9px] text-[#6ec1e4]`}>
          {label}
          <span className="-mt-[5px] border-x-[7px] border-t-[7px] border-x-transparent border-t-[#6ec1e4]" />
        </button>
      </div>
    </div>
  );
}

export default function App() {
  return (
    <div className="relative h-[857px] w-full overflow-hidden bg-[#3e454f] font-['Open_Sans','Noto_Sans',sans-serif]">
      <Backdrop />
      <div className="relative flex h-full flex-col">
        <div className="ml-[92px] flex w-[1710px] flex-1 flex-col">
          <div className="flex pt-[34px]">
            <Picker value="2017" label="Year" width="w-[110px]" />
            <Picker value="Assault" label="Crime" width="w-[128px]" />
            <Picker value="Connecticut" label="State" width="w-[119px]" />
            <div className="w-1/4 px-[22px]">
              <button className="flex h-[57px] w-[383px] items-center justify-center rounded-[6px] bg-[#6c757d] pt-[3px] text-[24px] tracking-[-0.9px] text-[#6ec1e4]">
                Generate
              </button>
            </div>
          </div>
          <div className="mt-[45px] h-[3px] bg-[#e0997a]" />
          <div className="mt-[36px] flex">
            <div className="w-[450px] shrink-0 pl-[22px]">
              <h3 className="mt-[1px] whitespace-nowrap text-[42px] font-semibold leading-[50px] tracking-[-1.6px] text-white">Connecticut, 2017</h3>
              <h6 className="mt-[15px] whitespace-nowrap text-[24px] font-semibold leading-[29px] tracking-[-0.7px] text-[#6ec1e4]">Assaults: 2524</h6>
              <h6 className="mt-[31px] whitespace-nowrap text-[24px] font-semibold leading-[29px] tracking-[-0.75px] text-[#6ec1e4]">Assaults per 100,000: 70.65</h6>
            </div>
            <div className="relative h-[600px] w-[1282px] shrink-0 overflow-hidden">
              <MapCanvas />
              <MapboxLogo />
              <div className="absolute bottom-0 right-0 flex h-[30px] w-[405px] items-center justify-between whitespace-nowrap bg-[#8d8d8d] px-[8px] font-['Liberation_Sans',Arial,sans-serif] text-[18px] text-[#3a3a3a]">
                <span>© Mapbox © OpenStreetMap</span>
                <span className="font-bold text-[#232323]">Improve this map</span>
              </div>
            </div>
          </div>
        </div>
        <footer className="flex h-[40px] items-center justify-center border-t-[5px] border-[#6ec1e4] bg-[#e8956f] font-['Liberation_Sans',Arial,sans-serif] text-[18px] text-[#0d0d0d]">
          Copyright © 2020 Patrick Dunn
        </footer>
      </div>
    </div>
  );
}
